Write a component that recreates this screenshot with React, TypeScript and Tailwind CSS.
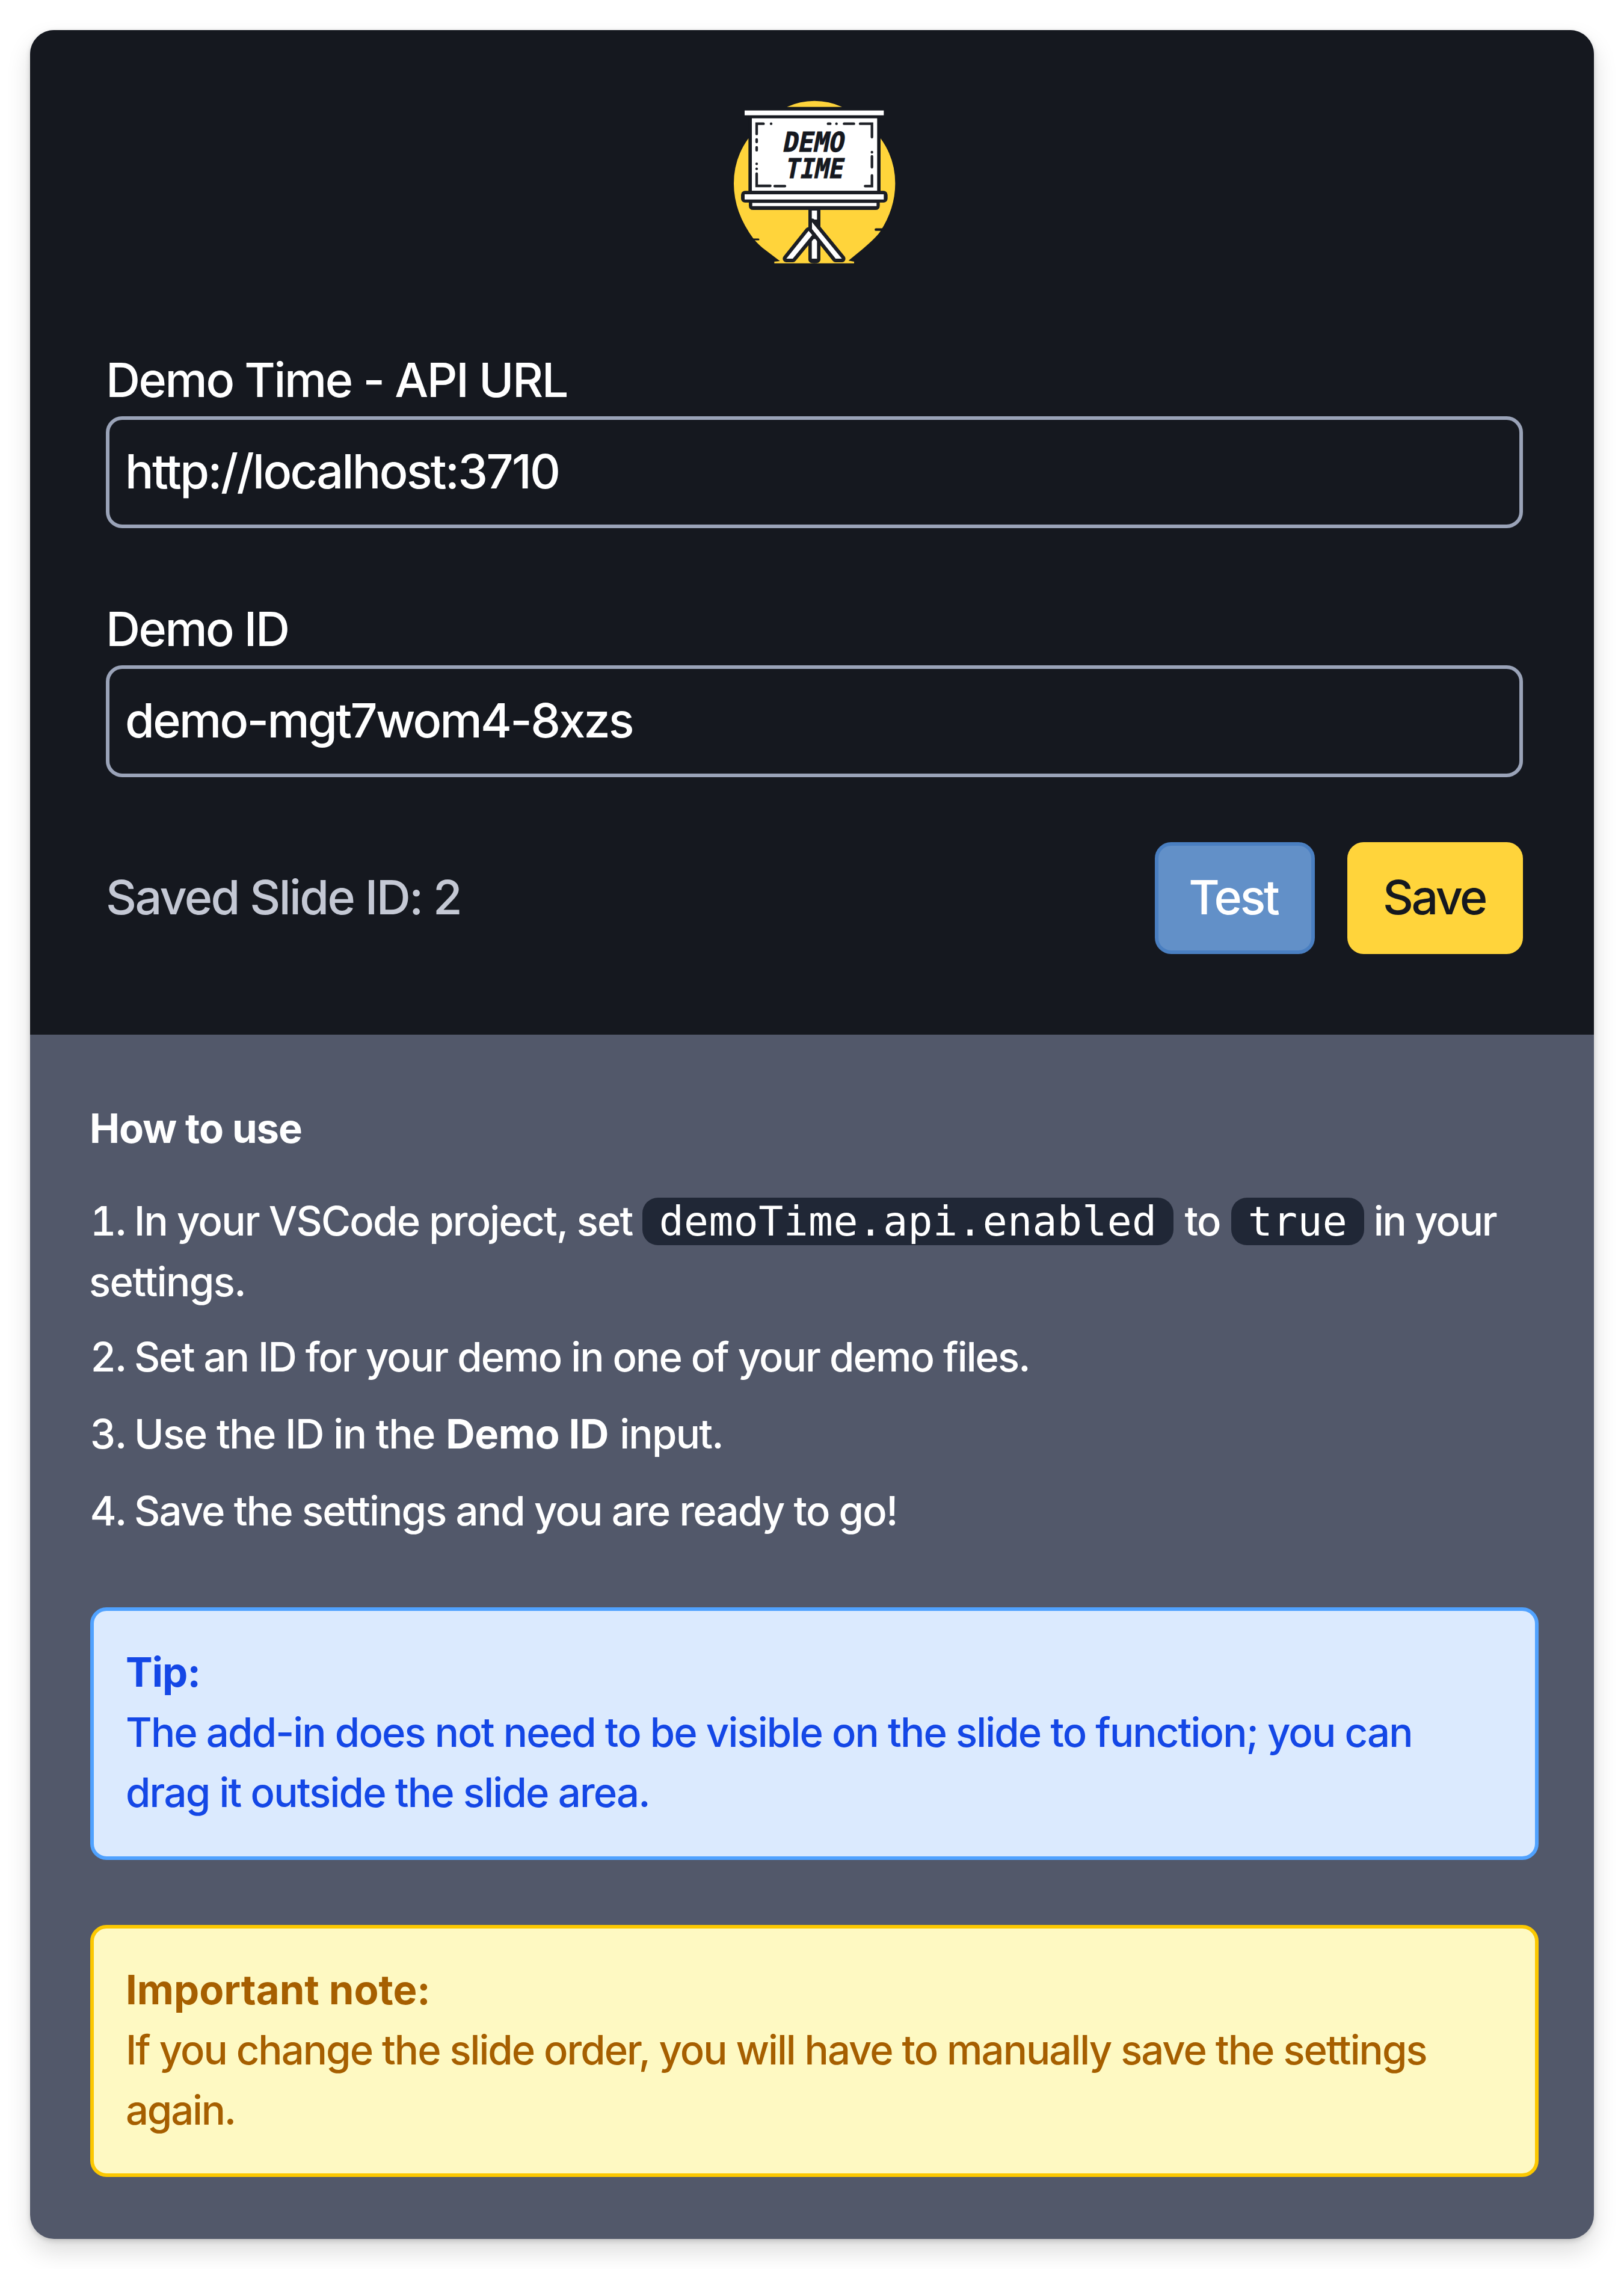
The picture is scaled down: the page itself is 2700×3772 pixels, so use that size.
import React from "react";

function Logo() {
  return (
    <svg className="block h-[310px] w-[310px]" viewBox="-3 0 930 930" role="img" aria-label="Demo Time">
      <path
        fill="#ffd43b"
        d="M325 83Q390 53 462 53Q535 53 600 83ZM133 240L792 240Q865 340 865 465Q865 590 790 705Q770 735 700 794L632 850L660 855V863H262V855L290 852L215 795Q188 775 160 743Q60 610 60 465Q60 340 133 240Z"
      />
      <path stroke="#15181f" strokeWidth="9" strokeLinecap="round" d="M150 744H183" />
      <path stroke="#15181f" strokeWidth="13" strokeLinecap="round" d="M769 695H810" />
      <rect x="133" y="120" width="659" height="400" fill="#15181f" />
      <rect x="114" y="101" width="694" height="24" fill="#fff" />
      <rect x="150" y="140" width="625" height="362" fill="#fff" />
      <path d="M432 585H492V845Q492 863 462 863Q432 863 432 845Z" fill="#1b1e25" />
      <rect x="449" y="600" width="26" height="45" fill="#fff" />
      <rect x="449" y="742" width="26" height="98" fill="#fff" />
      <g fill="#fff" stroke="#1b1e25" strokeWidth="36" strokeLinejoin="round" style={{ paintOrder: "stroke" }}>
        <path d="M433 701L452 721L354 840H322Z" />
        <path d="M450 658L599 840H568L450 692Z" />
      </g>
      <path d="M135 545H788V575Q788 597 766 597H157Q135 597 135 575Z" fill="#1b1e25" />
      <rect x="96" y="502" width="731" height="58" rx="20" fill="#1b1e25" />
      <rect x="114" y="519" width="694" height="26" fill="#fff" />
      <rect x="152" y="562" width="620" height="16" fill="#fff" />
      <path
        fill="none"
        stroke="#1f2228"
        strokeWidth="13"
        strokeLinecap="round"
        d="M174 218V167H208M246 167h.1M530 167H541M572 167h.1M610 167H659M690 167H749V234M749 309v.1M749 330V384M749 425V478H715M174 246V258M174 285V299M174 367v.1M174 392v.1M174 416V477H242M264 478H315"
      />
      <g fill="#15181f" stroke="#15181f" strokeWidth="3" fontFamily='"DejaVu Sans Mono", monospace' fontWeight="700" fontSize="136">
        <text transform="translate(300 305) skewX(-11)" textLength="306" lengthAdjust="spacingAndGlyphs">DEMO</text>
        <text transform="translate(312 437) skewX(-11)" textLength="290" lengthAdjust="spacingAndGlyphs">TIME</text>
      </g>
    </svg>
  );
}

function Field({ label, value, labelClass, valueClass }: { label: string; value: string; labelClass: string; valueClass: string }) {
  return (
    <div className="flex flex-col">
      <label className={`h-[120px] whitespace-nowrap text-[79px] leading-[118px] ${labelClass}`}>{label}</label>
      <div className="flex h-[186px] items-center rounded-[27px] border-[6px] border-[#9aa3b8] px-[26px] pb-[4px]">
        <span className={`whitespace-nowrap text-[79px] leading-[120px] ${valueClass}`}>{value}</span>
      </div>
    </div>
  );
}

function Step({ n, className = "", children }: { n: number; className?: string; children: React.ReactNode }) {
  return (
    <li className={`whitespace-nowrap ${className}`}>
      <span className="mr-[15px] inline-block w-[58px] text-right tabular-nums tracking-[-1.5px]">{n}.</span>
      {children}
    </li>
  );
}

function Code({ children }: { children: React.ReactNode }) {
  return (
    <code className="rounded-[26px] bg-[#202736] px-[28px] font-['DejaVu_Sans_Mono',monospace] text-[68px] font-normal tracking-[0.45px]">
      {children}
    </code>
  );
}

export default function App() {
  return (
    <div className="h-[3772px] w-[2700px] overflow-hidden bg-white p-[50px] font-['Inter',sans-serif] font-[450] text-white">
      <main className="h-[3672px] w-[2600px] overflow-hidden rounded-[40px] bg-[#52586a] shadow-[0_20px_40px_rgba(0,0,0,0.14),0_3px_8px_rgba(0,0,0,0.16)]">
        <section className="flex h-[1670px] w-[2608px] flex-col bg-[#15181f] px-[126px] pt-[100px]">
          <div className="mb-[112px] flex justify-center">
            <Logo />
          </div>
          <div className="flex flex-col gap-[108px]">
            <Field label="Demo Time - API URL" value="http://localhost:3710" labelClass="tracking-[-2.4px]" valueClass="tracking-[-2.6px]" />
            <Field label="Demo ID" value="demo-mgt7wom4-8xzs" labelClass="tracking-[-2.5px]" valueClass="tracking-[-2.65px]" />
            <div className="flex h-[186px] items-center justify-between">
              <span className="whitespace-nowrap pb-[5px] text-[79px] leading-[120px] tracking-[-2.6px] text-[#c4c8d4]">Saved Slide ID: 2</span>
              <div className="flex gap-[54px]">
                <button className="h-[186px] w-[266px] rounded-[27px] border-[6px] border-[#4a7fc1] bg-[#6290c8] pr-[5px] pb-[5px] text-[79px] leading-[120px] tracking-[-3.2px]">
                  Test
                </button>
                <button className="h-[186px] w-[292px] rounded-[27px] bg-[#ffd43b] pr-[3px] pb-[5px] text-[79px] leading-[120px] tracking-[-3.5px] text-[#15181f]">
                  Save
                </button>
              </div>
            </div>
          </div>
        </section>
        <section className="w-[2608px] px-[100px] pt-[106px] text-[67px] leading-[100px] tracking-[-1.8px]">
          <h2 className="ml-[-1px] whitespace-nowrap font-bold tracking-[-1px]">How to use</h2>
          <ol className="mt-[54px] flex flex-col gap-[28px]">
            <Step n={1} className="mb-[-3px]">
              In your VSCode project, set <Code>demoTime.api.enabled</Code>
              <span className="mx-[2px]"> to </span>
              <Code>true</Code>
              <span className="tracking-[-2.2px]"> in your</span>
              <br />
              <span className="ml-[-2px] tracking-[-1.6px]">settings.</span>
            </Step>
            <Step n={2} className="tracking-[-1.92px]">Set an ID for your demo in one of your demo files.</Step>
            <Step n={3} className="tracking-[-1.5px]">
              Use the ID in the <strong className="ml-[2px] font-bold tracking-[-0.4px]">Demo ID</strong>
              <span className="ml-[2px] tracking-[-1.7px]"> input.</span>
            </Step>
            <Step n={4}>Save the settings and you are ready to go!</Step>
          </ol>
          <div className="mt-[110px] h-[420px] whitespace-nowrap rounded-[27px] border-[6px] border-[#50a2ff] bg-[#dbeafe] px-[53px] pt-[52px] text-[#1447e6]">
            <p className="font-bold tracking-[-0.9px]">Tip:</p>
            <p className="tracking-[-1.85px]">The add-in does not need to be visible on the slide to function; you can</p>
            <p>drag it outside the slide area.</p>
          </div>
          <div className="mt-[108px] h-[419px] whitespace-nowrap rounded-[27px] border-[6px] border-[#fcc800] bg-[#fef9c2] px-[53px] pt-[52px] text-[#a65f00]">
            <p className="font-bold tracking-[0px]">Important note:</p>
            <p className="tracking-[-1.97px]">If you change the slide order, you will have to manually save the settings</p>
            <p className="tracking-[-2.2px]">again.</p>
          </div>
        </section>
      </main>
    </div>
  );
}
